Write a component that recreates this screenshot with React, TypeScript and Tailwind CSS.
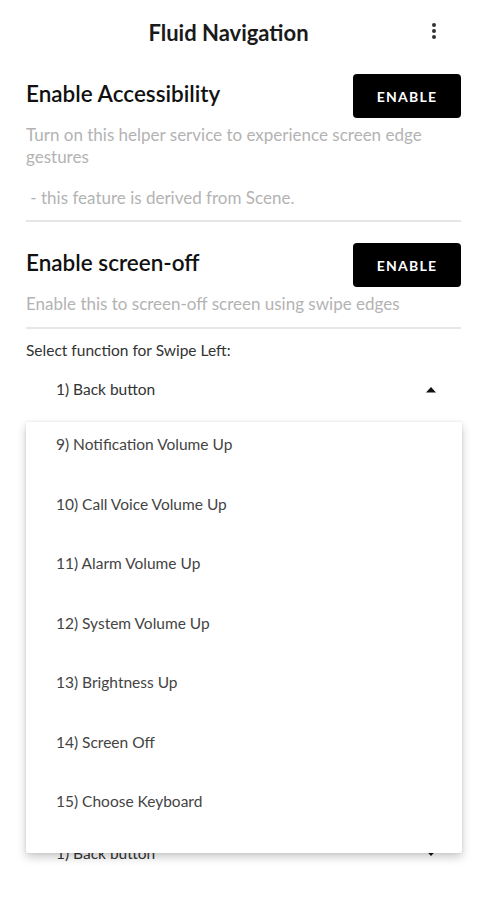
import React from "react";

const options = [
  "9) Notification Volume Up",
  "10) Call Voice Volume Up",
  "11) Alarm Volume Up",
  "12) System Volume Up",
  "13) Brightness Up",
  "14) Screen Off",
  "15) Choose Keyboard",
];

function Caret({ up }: { up?: boolean }) {
  return (
    <svg width="12" height="7" viewBox="0 0 12 7" className="shrink-0">
      {up ? <path d="M1 6.5 L6 1 L11 6.5 Z" fill="#111" /> : <path d="M1 0.5 L6 6 L11 0.5 Z" fill="#111" />}
    </svg>
  );
}

function EnableButton() {
  return (
    <button className="h-[44px] w-[108px] shrink-0 rounded-[4px] bg-black text-[14px] font-bold tracking-[1.2px] text-white">
      ENABLE
    </button>
  );
}

function SpinnerRow({ up, className }: { up?: boolean; className: string }) {
  return (
    <div
      className={
        "flex h-[22px] items-center justify-between pl-[30px] pr-[24px] text-[15.5px] leading-[22px] text-[#333] " + className
      }
    >
      <span>1) Back button</span>
      <Caret up={up} />
    </div>
  );
}

export default function App() {
  return (
    <div className="relative h-[900px] w-[487px] overflow-hidden bg-white font-['Lato','Liberation_Sans',sans-serif]">
      <div className="relative flex h-[64px] items-center">
        <h1 className="w-full pr-[30px] text-center text-[22px] font-bold text-[#1a1a1a]">Fluid Navigation</h1>
        <div className="absolute left-[432px] top-[23px] flex flex-col gap-[2px]">
          <span className="h-[4px] w-[4px] rounded-full bg-[#333]" />
          <span className="h-[4px] w-[4px] rounded-full bg-[#333]" />
          <span className="h-[4px] w-[4px] rounded-full bg-[#333]" />
        </div>
      </div>

      <div className="px-[26px]">
        <div className="mt-[10px] flex items-center justify-between">
          <h2 className="-mt-[5px] text-[22.5px] font-semibold text-[#111]">Enable Accessibility</h2>
          <EnableButton />
        </div>
        <p className="mt-[6px] pr-[10px] text-[17px] leading-[22px] text-[#b3b3b3]">
          Turn on this helper service to experience screen edge gestures
        </p>
        <p className="mt-[19px] text-[17px] leading-[22px] text-[#b3b3b3]">&nbsp;- this feature is derived from Scene.</p>
        <div className="mt-[11px] h-[2px] bg-[#e6e6e6]" />

        <div className="mt-[21px] flex items-center justify-between">
          <h2 className="-mt-[5px] text-[22.5px] font-semibold text-[#111]">Enable screen-off</h2>
          <EnableButton />
        </div>
        <p className="mt-[6px] text-[17px] leading-[22px] text-[#b3b3b3]">Enable this to screen-off screen using swipe edges</p>
        <div className="mt-[12px] h-[2px] bg-[#e6e6e6]" />

        <div className="mt-[10px] h-[22px] text-[15.5px] leading-[22px] text-[#333]">Select function for Swipe Left:</div>
        <SpinnerRow up className="mt-[17px]" />
        <SpinnerRow className="mt-[442px]" />
      </div>

      <div className="absolute left-[26px] top-[422px] h-[431px] w-[436px] overflow-hidden rounded-[2px] bg-white shadow-[0_4px_10px_rgba(0,0,0,0.22),0_0_3px_rgba(0,0,0,0.08)]">
        <div className="-mt-[7px]">
          {options.map(function (o) {
            return (
              <div key={o} className="flex h-[59.5px] items-center pl-[30px] text-[15.5px] text-[#444]">
                {o}
              </div>
            );
          })}
        </div>
      </div>
    </div>
  );
}
